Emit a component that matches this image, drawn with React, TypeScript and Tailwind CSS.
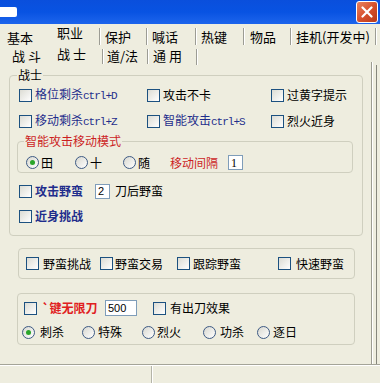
import React from "react";

const CB = () => (
  <span className="block w-[13px] h-[13px] shrink-0 border border-[#1c5180] bg-linear-to-br from-[#dcdcd4] to-white" />
);

const Radio = ({ checked }: { checked?: boolean }) => (
  <span className="flex w-[13px] h-[13px] shrink-0 items-center justify-center rounded-full border border-[#3d5a84] bg-linear-to-br from-[#d8d8d0] to-white">
    {checked && <span className="block w-[5px] h-[5px] rounded-full bg-[#2aa52a]" />}
  </span>
);

const Sep = ({ h, mt }: { h: string; mt: string }) => (
  <span className={`block w-[2px] shrink-0 border-l border-l-[#9c9c94] border-r border-r-white ${h} ${mt}`} />
);

const Mono = ({ children }: { children: React.ReactNode }) => (
  <span className="font-[family-name:'Liberation_Mono',monospace] text-[11px] tracking-[-1px]">{children}</span>
);

export default function App() {
  return (
    <div className="w-[380px] h-[383px] overflow-hidden bg-[#eeeddf] flex flex-col font-[family-name:'Noto_Sans_CJK_SC',sans-serif] text-black select-none">
      {/* Title bar */}
      <div className="h-[24px] shrink-0 flex items-start justify-between bg-linear-to-b from-[#0a4fdc] via-[#0853e2] to-[#1c64ec]">
        <div className="mt-[7px] w-[17px] h-[10px] bg-white rounded-r-[2px]" />
        <div className="mt-[1px] mr-[2px] w-[22px] h-[22px] rounded-[3px] border border-white bg-linear-to-br from-[#e8825e] via-[#d8502c] to-[#b83a18] flex items-center justify-center">
          <svg width="12" height="12" viewBox="0 0 12 12">
            <path d="M1.5 1.5 L10.5 10.5 M10.5 1.5 L1.5 10.5" stroke="white" strokeWidth="2.2" strokeLinecap="round" />
          </svg>
        </div>
      </div>

      {/* Tab row 1 */}
      <div className="h-[23px] shrink-0 flex items-start text-[13px] leading-[14px]">
        <div className="w-[48px] pl-[7px] pt-[7px]">基本</div>
        <div className="w-[51px] pl-[9px] pt-[2px]">职业</div>
        <Sep h="h-[17px]" mt="mt-[4px]" />
        <div className="w-[45px] pl-[4px] pt-[6px]">保护</div>
        <Sep h="h-[17px]" mt="mt-[4px]" />
        <div className="w-[47px] pl-[4px] pt-[6px]">喊话</div>
        <Sep h="h-[17px]" mt="mt-[4px]" />
        <div className="w-[46px] pl-[4px] pt-[6px]">热键</div>
        <Sep h="h-[17px]" mt="mt-[4px]" />
        <div className="w-[45px] pl-[5px] pt-[6px]">物品</div>
        <Sep h="h-[17px]" mt="mt-[4px]" />
        <div className="w-[83px] pl-[4px] pt-[6px] whitespace-nowrap">挂机(开发中)</div>
        <Sep h="h-[17px]" mt="mt-[4px]" />
      </div>

      {/* Tab row 2 */}
      <div className="h-[18px] shrink-0 flex items-start text-[13px] leading-[14px]">
        <div className="w-[50px] pl-[12px] pt-[2px] whitespace-pre">战 斗</div>
        <div className="w-[52px] pl-[7px] pt-0 whitespace-pre">战 士</div>
        <Sep h="h-[15px]" mt="mt-[2px]" />
        <div className="w-[43px] pl-[3px] pt-[2px]">道/法</div>
        <Sep h="h-[15px]" mt="mt-[2px]" />
        <div className="w-[47px] pl-[4px] pt-[2px] whitespace-pre">通 用</div>
        <Sep h="h-[16px]" mt="mt-[2px]" />
      </div>

      {/* Main */}
      <div className="h-[299px] shrink-0 flex">
        <div className="w-[371px] shrink-0 flex flex-col text-[12px] leading-[14px]">
          {/* 战士 group */}
          <fieldset className="ml-[9px] mt-[3px] w-[354px] min-w-0 border border-[#cfcfbf] rounded-[4px] p-0">
            <legend className="ml-[7px] px-[1px] text-[12px] leading-[14px]">战士</legend>
            <div className="h-[26px] flex items-center pl-[9px]">
              <div className="w-[128px] flex items-center gap-[3px]">
                <CB />
                <span className="text-[#1f2d8c] whitespace-nowrap">格位剩杀<Mono>ctrl+D</Mono></span>
              </div>
              <div className="w-[124px] flex items-center gap-[3px]">
                <CB />
                <span>攻击不卡</span>
              </div>
              <div className="flex items-center gap-[3px]">
                <CB />
                <span>过黄字提示</span>
              </div>
            </div>
            <div className="h-[26px] flex items-center pl-[9px]">
              <div className="w-[128px] flex items-center gap-[3px]">
                <CB />
                <span className="text-[#1f2d8c] whitespace-nowrap">移动剩杀<Mono>ctrl+Z</Mono></span>
              </div>
              <div className="w-[124px] flex items-center gap-[3px]">
                <CB />
                <span className="text-[#1f2d8c] whitespace-nowrap">智能攻击<Mono>ctrl+S</Mono></span>
              </div>
              <div className="flex items-center gap-[3px]">
                <CB />
                <span>烈火近身</span>
              </div>
            </div>

            {/* 智能攻击移动模式 */}
            <fieldset className="ml-[7px] w-[336px] min-w-0 border border-[#cfcfbf] rounded-[4px] p-0">
              <legend className="ml-[6px] px-[1px] text-[12px] leading-[14px] text-[#cc1f1f]">智能攻击移动模式</legend>
              <div className="flex items-center pl-[8px] pt-[8px] pb-[3px] h-[24px]">
                <div className="w-[49px] flex items-center gap-[2px]">
                  <Radio checked />
                  <span>田</span>
                </div>
                <div className="w-[48px] flex items-center gap-[2px]">
                  <Radio />
                  <span>十</span>
                </div>
                <div className="w-[47px] flex items-center gap-[2px]">
                  <Radio />
                  <span>随</span>
                </div>
                <span className="text-[#cc1f1f]">移动间隔</span>
                <span className="ml-[10px] w-[15px] h-[15px] bg-white border border-[#7f9db9] flex items-center pl-[2px] font-[family-name:'Liberation_Serif',serif] text-[12px]">1</span>
              </div>
            </fieldset>

            <div className="mt-[5px] h-[26px] flex items-center pl-[9px]">
              <CB />
              <span className="ml-[3px] w-[48px] text-[#1f2d8c] font-bold">攻击野蛮</span>
              <span className="ml-[12px] w-[15px] h-[15px] bg-white border border-[#7f9db9] flex items-center pl-[2px] font-[family-name:'Liberation_Sans',sans-serif] text-[11px]">2</span>
              <span className="ml-[5px]">刀后野蛮</span>
            </div>
            <div className="h-[24px] flex items-center pl-[9px] mb-[7px]">
              <CB />
              <span className="ml-[3px] text-[#1f2d8c] font-bold">近身挑战</span>
            </div>
          </fieldset>

          {/* Group 2 */}
          <div className="mt-[12px] ml-[18px] w-[337px] h-[31px] border border-[#cfcfbf] rounded-[4px] flex items-center pl-[7px]">
            <div className="w-[74px] flex items-center gap-[4px]">
              <CB />
              <span>野蛮挑战</span>
            </div>
            <div className="w-[77px] flex items-center gap-[2px]">
              <CB />
              <span>野蛮交易</span>
            </div>
            <div className="w-[101px] flex items-center gap-[3px]">
              <CB />
              <span>跟踪野蛮</span>
            </div>
            <div className="flex items-center gap-[5px]">
              <CB />
              <span>快速野蛮</span>
            </div>
          </div>

          {/* Group 3 */}
          <div className="mt-[14px] ml-[17px] w-[338px] h-[52px] border border-[#cfcfbf] rounded-[4px] flex flex-col pt-[2px]">
            <div className="h-[24px] flex items-center pl-[6px]">
              <div className="w-[81px] flex items-center gap-[5px]">
                <CB />
                <span className="text-[#e02020] font-bold whitespace-nowrap">`键无限刀</span>
              </div>
              <span className="w-[32px] h-[16px] bg-white border border-[#7f9db9] flex items-center pl-[2px] font-[family-name:'Liberation_Sans',sans-serif] text-[11px]">500</span>
              <div className="ml-[16px] flex items-center gap-[4px]">
                <CB />
                <span>有出刀效果</span>
              </div>
            </div>
            <div className="h-[24px] flex items-center pl-[4px]">
              <div className="w-[60px] flex items-center gap-[5px]">
                <Radio checked />
                <span>刺杀</span>
              </div>
              <div className="w-[60px] flex items-center gap-[3px]">
                <Radio />
                <span>特殊</span>
              </div>
              <div className="w-[61px] flex items-center gap-[2px]">
                <Radio />
                <span>烈火</span>
              </div>
              <div className="w-[54px] flex items-center gap-[4px]">
                <Radio />
                <span>功杀</span>
              </div>
              <div className="flex items-center gap-[3px]">
                <Radio />
                <span>逐日</span>
              </div>
            </div>
          </div>
        </div>
        <div className="w-[1px] shrink-0 bg-[#9d9d92] mt-[-3px]" />
        <div className="w-[1px] shrink-0 bg-white mt-[-3px]" />
        <div className="w-[3px] shrink-0" />
        <div className="w-[1px] shrink-0 bg-[#86867c]" />
      </div>

      {/* Bottom status bar */}
      <div className="h-[1px] shrink-0 bg-[#a4a498]" />
      <div className="h-[1px] shrink-0 bg-white" />
      <div className="flex-1 flex">
        <div className="w-[152px] border-r border-r-[#b4b4a8]" />
        <div className="w-[1px] bg-white" />
      </div>
    </div>
  );
}
